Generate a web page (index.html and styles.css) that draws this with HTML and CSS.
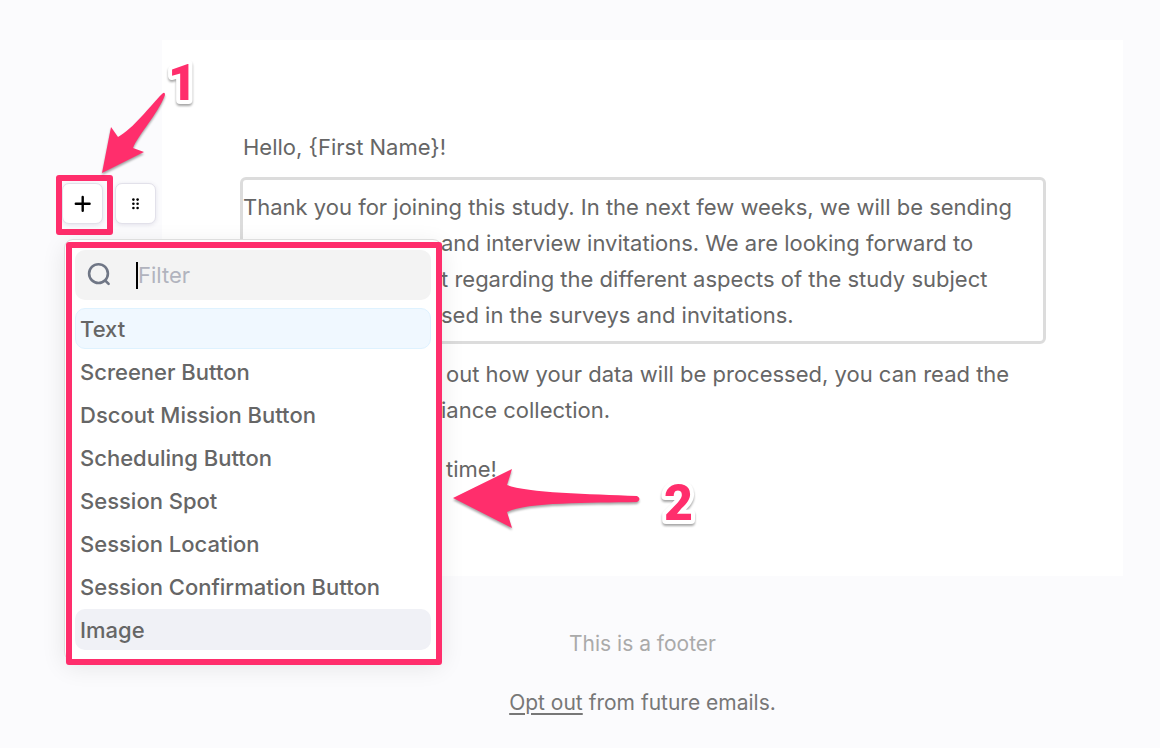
FILE: index.html
```html
<!DOCTYPE html>
<html lang="en">

<head>
    <meta charset="UTF-8">
    <meta name="viewport" content="width=device-width, initial-scale=1.0">
    <title>Email editor</title>
    <link rel="stylesheet" href="styles.css">
</head>

<body>
    <div class="editor">
        <div class="gutter">
            <div class="block-tools">
                <button type="button" class="tool" aria-label="Add block">
                    <svg width="18" height="18" viewBox="0 0 18 18" stroke="#000" stroke-width="2.4" stroke-linecap="round">
                        <path d="M8.7 1.9v13.8M1.8 8.8h13.8" />
                    </svg>
                </button>
                <button type="button" class="tool" aria-label="Move block">
                    <svg width="10" height="14" viewBox="0 0 10 14" fill="#000">
                        <circle cx="2.4" cy="2.6" r="1.3" />
                        <circle cx="6.6" cy="2.6" r="1.3" />
                        <circle cx="2.4" cy="6.8" r="1.3" />
                        <circle cx="6.6" cy="6.8" r="1.3" />
                        <circle cx="2.4" cy="11" r="1.3" />
                        <circle cx="6.6" cy="11" r="1.3" />
                    </svg>
                </button>
                <div class="frame frame-add"></div>
            </div>

            <!-- Block menu -->
            <div class="menu">
                <div class="filter">
                    <svg width="26" height="26" viewBox="0 0 26 26" fill="none" stroke="#6f7685" stroke-width="2.6" stroke-linecap="round">
                        <circle cx="11.5" cy="11.6" r="9.4" />
                        <path d="M18.6 18.8l3 3" />
                    </svg>
                    <span class="caret"></span>
                    <input type="text" placeholder="Filter" aria-label="Filter">
                </div>
                <div class="menu-list">
                    <button type="button" class="item selected">Text</button>
                    <button type="button" class="item">Screener Button</button>
                    <button type="button" class="item">Dscout Mission Button</button>
                    <button type="button" class="item">Scheduling Button</button>
                    <button type="button" class="item">Session Spot</button>
                    <button type="button" class="item">Session Location</button>
                    <button type="button" class="item">Session Confirmation Button</button>
                    <button type="button" class="item hover">Image</button>
                </div>
                <div class="frame frame-menu"></div>
            </div>
        </div>

        <div class="email">
            <p>Hello, {First Name}!</p>
            <p class="active">Thank you for joining this study. In the next few weeks, we will be sending<br>
                <span class="tail">and interview invitations. We are looking forward to</span><br>
                <span class="tail">t regarding the different aspects of the study subject</span><br>
                <span class="tail">sed in the surveys and invitations.</span></p>
            <p><span class="tail tail-far">out how your data will be processed, you can read the</span><br>
                <span class="tail">iance collection.</span></p>
            <p><span class="tail tail-far">time!</span></p>
        </div>

        <footer class="footer">
            <p class="note">This is a footer</p>
            <p><a href="#">Opt out</a> from future emails.</p>
        </footer>

        <!-- Step markers -->
        <svg class="mark arrow-add" width="80" height="96" viewBox="0 0 80 96">
            <path d="M12 87L21 41L28 51C43 43 60 20 72 8Q75 5 75 9C68 28 48 49 43 62L54 66Z" fill="#ff2e6c" />
        </svg>
        <svg class="mark arrow-menu" width="204" height="72" viewBox="0 0 204 72">
            <path d="M8 34L67 5L62 21C82 29 145 30 192 32Q197 35 192 38C145 39 82 38 62 48L67 64Z" fill="#ff2e6c" />
        </svg>
        <svg class="mark step step-one" width="44" height="76" viewBox="0 0 44 76">
            <text x="7" y="54">1</text>
        </svg>
        <svg class="mark step step-two" width="44" height="76" viewBox="0 0 44 76">
            <text x="7" y="54">2</text>
        </svg>
    </div>
</body>

</html>
```
FILE: styles.css
```css
* {
    box-sizing: border-box;
}

body {
    margin: 0;
    background: #fbfbfd;
    color: #666;
    font-family: Inter, "Liberation Sans", sans-serif;
    font-size: 22px;
    line-height: 36px;
}

p {
    margin: 0;
}

button,
input {
    font: inherit;
    color: inherit;
}

.editor {
    position: relative;
    display: grid;
    grid-template-columns: 162px 1fr;
    padding: 40px 37px 24px 0;
}

/* Gutter */
.gutter {
    position: relative;
}

.block-tools {
    position: relative;
    display: flex;
    gap: 12px;
    padding: 143px 0 0 62px;
}

.tool {
    display: flex;
    align-items: center;
    justify-content: center;
    width: 41px;
    height: 41px;
    padding: 0;
    background: #fff;
    border: 1px solid #e2e1ea;
    border-radius: 7px;
    box-shadow: 0 1px 4px rgba(80, 70, 120, 0.14);
}

.frame {
    position: absolute;
    border: 6px solid #ff2e6c;
    border-radius: 3px;
    pointer-events: none;
}

.frame-add {
    top: 135px;
    left: 56px;
    width: 57px;
    height: 60px;
}

/* Menu */
.menu {
    position: absolute;
    z-index: 1;
    top: 199px;
    left: 64px;
    width: 378px;
    padding: 10px;
    background: #fff;
    border: 1px solid #dedede;
    border-radius: 9px;
    box-shadow: 0 6px 24px rgba(0, 0, 0, 0.09);
}

.frame-menu {
    top: 2px;
    right: -1px;
    bottom: -5px;
    left: 1px;
}

.filter {
    display: flex;
    align-items: center;
    height: 50px;
    padding: 0 12px;
    background: #f3f3f3;
    border-radius: 10px;
}

.caret {
    width: 2px;
    height: 27px;
    margin-left: 23px;
    background: #000;
}

.filter input {
    flex: 1;
    min-width: 0;
    padding: 0;
    background: none;
    border: 0;
    outline: 0;
}

.filter input::placeholder {
    color: #b1b3be;
    opacity: 1;
}

.menu-list {
    display: grid;
    gap: 2px;
    margin-top: 8px;
}

.item {
    height: 41px;
    padding: 0 4px;
    background: none;
    border: 1px solid transparent;
    border-radius: 10px;
    font-weight: 500;
    line-height: 36px;
    text-align: left;
}

.selected {
    background: #f0f8ff;
    border-color: #def2ff;
}

.hover {
    background: #f0f1f6;
}

/* Email */
.email {
    min-height: 536px;
    padding: 89px 77px 0 78px;
    background: #fff;
}

.email p {
    padding: 0 3px;
    margin-bottom: 23px;
    white-space: nowrap;
}

.email .active {
    padding: 9px 0 8px;
    margin: -11px 0 12px;
    border: 3px solid #dcdcdc;
    border-radius: 6px;
}

/* part of a line that stays clear of the open menu */
.tail {
    padding-left: 198px;
}

.tail-far {
    padding-left: 203px;
}

.footer {
    grid-column: 2;
    padding-top: 50px;
    font-size: 21px;
    text-align: center;
    color: #777;
}

.footer .note {
    margin-bottom: 23px;
    color: #aaa;
}

.footer a {
    color: inherit;
    text-underline-offset: 3px;
}

/* Step markers */
.mark {
    position: absolute;
    z-index: 2;
    filter: drop-shadow(0 2px 1px rgba(0, 0, 0, 0.35));
}

.arrow-add {
    top: 86px;
    left: 90px;
}

.arrow-menu {
    top: 464px;
    left: 445px;
}

.step text {
    fill: #ff2e6c;
    stroke: #fff;
    stroke-width: 8px;
    stroke-linejoin: round;
    paint-order: stroke;
    font-family: Roboto, sans-serif;
    font-size: 50px;
    font-weight: 900;
}

.step-one {
    top: 46px;
    left: 161px;
}

.step-two {
    top: 466px;
    left: 657px;
}
```
